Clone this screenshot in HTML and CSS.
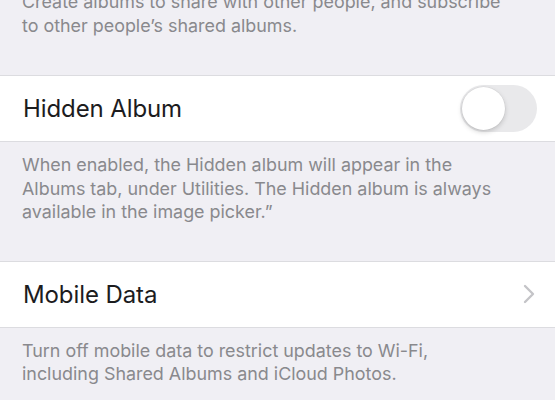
FILE: index.html
```html
<!DOCTYPE html>
<html lang="en">
<head>
  <meta charset="UTF-8" />
  <meta name="viewport" content="width=device-width, initial-scale=1.0" />
  <title>Photos Settings</title>
  <link rel="stylesheet" href="styles.css">
</head>
<body>
  <div class="settings">
    <p class="note note-top">Create albums to share with other people, and subscribe to other people’s shared albums.</p>

    <div class="group">
      <div class="row">
        <span class="label">Hidden Album</span>
        <span class="toggle"><span class="knob"></span></span>
      </div>
    </div>
    <p class="note">When enabled, the Hidden album will appear in the Albums tab, under Utilities. The Hidden album is always available in the image picker.”</p>

    <div class="group">
      <div class="row">
        <span class="label">Mobile Data</span>
        <svg class="chevron" width="12" height="20" viewBox="0 0 12 20">
          <path d="M2 2 L10 10 L2 18" fill="none" stroke="#c4c4c8" stroke-width="2.4" stroke-linecap="round" stroke-linejoin="round"/>
        </svg>
      </div>
    </div>
    <p class="note">Turn off mobile data to restrict updates to Wi-Fi, including Shared Albums and iCloud Photos.</p>
  </div>
</body>
</html>
```

FILE: styles.css
```css
/* Reset */
*, *::before, *::after {
  margin: 0;
  padding: 0;
  box-sizing: border-box;
}

html, body {
  width: 100%;
  height: 100%;
  background: #f0eff4;
  font-family: 'Inter', 'Noto Sans', sans-serif;
  overflow: hidden;
}

.settings {
  display: flex;
  flex-direction: column;
}

.note {
  padding: 11px 60px 0 22px;
  font-size: 17.9px;
  line-height: 23.5px;
  color: #89898d;
  margin-bottom: 37px;
}

.note-top {
  margin-top: -10px;
  padding-top: 0;
  padding-right: 45px;
  margin-bottom: 38px;
}

.group {
  background: #ffffff;
  border-top: 1px solid #dcdce0;
  border-bottom: 1px solid #dcdce0;
}

.row {
  height: 65px;
  display: flex;
  align-items: center;
  justify-content: space-between;
  padding: 0 18px 0 23px;
}

.label {
  font-size: 24px;
  color: #1c1c1e;
  letter-spacing: -0.1px;
}

.toggle {
  width: 77px;
  height: 47px;
  border-radius: 24px;
  background: #e9e9eb;
  display: flex;
  align-items: center;
  padding: 0 2px;
}

.knob {
  width: 43px;
  height: 43px;
  border-radius: 50%;
  background: #ffffff;
  box-shadow: 0 2px 5px rgba(0, 0, 0, 0.18), 0 0 0 0.5px rgba(0, 0, 0, 0.06);
}

.chevron {
  margin-right: 2px;
}
```
